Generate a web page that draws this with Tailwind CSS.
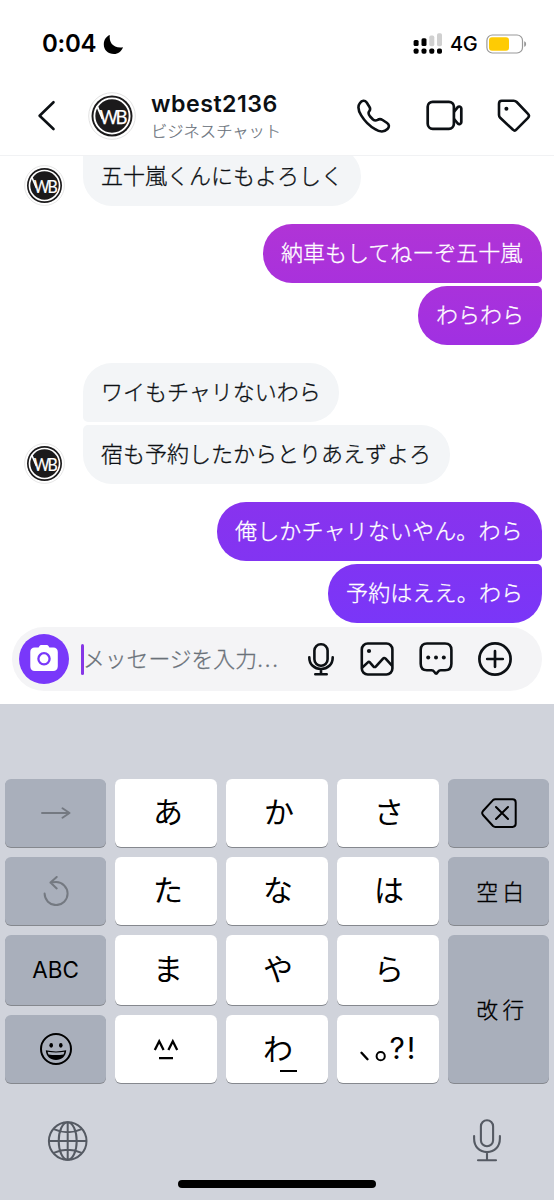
<!DOCTYPE html>
<html lang="ja">
<head>
<meta charset="utf-8">
<meta name="viewport" content="width=device-width">
<title>wbest2136</title>
<script src="https://cdn.jsdelivr.net/npm/@tailwindcss/browser@4"></script>
</head>
<body class="bg-white">
<svg class="hidden">
  <symbol id="avatar" viewBox="0 0 48 48">
    <circle cx="24" cy="24" r="23.3" fill="#fff" stroke="#e2e2e2" stroke-width="1"/>
    <circle cx="24" cy="24" r="20.5" fill="#1b1a1b"/>
    <circle cx="24" cy="24" r="17.6" fill="none" stroke="#fff" stroke-width="1.9"/>
    <path d="M9 13.8 14.5 27" fill="none" stroke="#fff" stroke-width="1.9"/>
    <g font-family="Lato, sans-serif" font-size="19.5" font-weight="400" fill="#fff" stroke="#fff" stroke-width=".25">
      <text x="11.5" y="32.4" textLength="18.5" lengthAdjust="spacingAndGlyphs">W</text>
      <text x="27.6" y="32.4" textLength="12" lengthAdjust="spacingAndGlyphs">B</text>
    </g>
  </symbol>
</svg>
<div class="flex h-[1200px] w-[554px] flex-col overflow-hidden bg-white font-['Inter','Noto_Sans_CJK_JP',sans-serif] text-[#0c1014]">

  <!-- Status bar -->
  <div class="flex h-[76px] shrink-0 items-center pt-[12px] pr-[27px] pl-[42px] text-black">
    <span class="w-[55px] text-[24px] leading-none font-semibold tracking-[-0.3px]">0:04</span>
    <svg class="ml-[6px] h-[21px] w-[21px]" viewBox="0 0 21 21"><path d="M6.8 1C5.8 9 10.5 14.5 20 13.2C18.5 17.3 15 20 11 20C5 20 .8 15.9 .8 10.5C.8 6 3.2 2.3 6.8 1Z"/></svg>
    <svg class="ml-auto h-[22px] w-[30px]" viewBox="0 0 30 22">
      <g fill="#d0d0d0"><rect x="16.3" y="2.6" width="5" height="10.6" rx="1.6"/><rect x="24" y="0.2" width="5" height="13" rx="1.6"/></g>
      <rect x=".6" y="7.1" width="5" height="5.8" rx="1.5"/><rect x="8.5" y="5.3" width="5" height="7.6" rx="1.5"/>
      <rect x=".6" y="15.4" width="5" height="5.4" rx="1.8"/><rect x="8.5" y="15.4" width="5" height="5.4" rx="1.8"/><rect x="16.3" y="15.4" width="5" height="5.4" rx="1.8"/><rect x="24" y="15.4" width="5" height="5.4" rx="1.8"/>
    </svg>
    <span class="ml-[7px] w-[30px] text-[20px] leading-none font-medium tracking-tight">4G</span>
    <svg class="ml-[6px] h-[20px] w-[41px]" viewBox="0 0 41 20">
      <rect x=".9" y="1" width="35.6" height="18" rx="5.5" fill="#fff" stroke="#999" stroke-width="1.2"/>
      <rect x="3" y="3.3" width="20" height="13.4" rx="3" fill="#fecb04"/>
      <path d="M38.2 7.2C40.8 8 40.8 12 38.2 12.8Z" fill="#999"/>
    </svg>
  </div>

  <!-- Chat header -->
  <div class="flex h-[80px] shrink-0 items-center border-b border-[#f1f2f4] pr-[23px] pl-[36px]">
    <svg class="h-[32px] w-[20px]" viewBox="0 0 20 32" fill="none" stroke="#0c1014" stroke-width="2.6" stroke-linecap="round" stroke-linejoin="round"><path d="M17.5 2.2 3.6 15.8 17.5 29"/></svg>
    <svg class="ml-[32px] h-[48px] w-[48px]"><use href="#avatar"/></svg>
    <div class="ml-[15px] flex flex-col pt-[3px]">
      <span class="text-[23.2px] leading-[27px] font-semibold tracking-[0.5px]">wbest2136</span>
      <span class="text-[16.3px] leading-[26px] font-light text-[#6a727b] [-webkit-text-stroke:0.2px]">ビジネスチャット</span>
    </div>
    <svg class="ml-auto h-[36px] w-[36px]" viewBox="0 0 36 36" fill="none" stroke="#0c1014" stroke-width="2.6" stroke-linejoin="round"><path d="M4.8 5.2C7 2.1 9.8 1.9 11.7 4.5L14.5 9C15.6 10.7 15.3 12 14.1 13.5C12.8 15.1 13.5 16.4 15.1 18.5L18 21.5C19.7 22.9 21 22.8 22.6 21.9C24.3 20.8 26 21 27.6 22L32.1 25C34.4 26.7 34.5 29 32.5 31C29.4 34.2 24.5 34 20.1 31.1C15.3 28.5 9.4 22.7 6.2 17.4C3.3 12.6 2.4 8.4 4.8 5.2Z"/></svg>
    <svg class="ml-[34px] h-[36px] w-[38px]" viewBox="0 0 38 36" fill="none" stroke="#0c1014" stroke-width="2.7" stroke-linejoin="round"><rect x="2.7" y="3.8" width="26.2" height="27" rx="5"/><path d="M29.1 13.7 32.8 9.1C34.1 7.9 36.3 8.7 36.3 10.5V24.3C36.3 26 34.1 26.7 32.8 25.5L29.1 21"/></svg>
    <svg class="ml-[32px] h-[36px] w-[36px]" viewBox="0 0 36 36"><path d="M6.7 2.7H18.6C20 2.7 20.8 3.1 21.7 4L33 15.8C34.4 17.3 34.3 18.5 33 19.8L21.3 31.7C20.2 32.9 19.2 32.9 18 31.7L5.2 19.8C4.4 19 4 18.2 4 17.1V5.8C4 3.9 5 2.7 6.7 2.7Z" fill="none" stroke="#0c1014" stroke-width="2.6" stroke-linejoin="round"/><circle cx="11.4" cy="10.8" r="2" fill="#0c1014"/></svg>
  </div>

  <!-- Messages -->
  <div class="flex h-[471px] shrink-0 flex-col overflow-hidden pr-[12px] pl-[24px] text-[22px] leading-none font-light whitespace-nowrap [-webkit-text-stroke:0.3px]">
    <div class="flex h-[50px] shrink-0 items-end">
      <svg class="h-[41px] w-[41px] shrink-0"><use href="#avatar"/></svg>
      <div class="ml-[18px] flex h-[59px] w-[278px] shrink-0 items-center rounded-[29px] rounded-tl-[5px] bg-[#f3f5f7] pb-[2px] pl-[18px]">五十嵐くんにもよろしく</div>
    </div>
    <div class="mt-[18px] flex flex-col items-end gap-[3px] text-white">
      <div class="flex h-[59px] w-[279px] items-center rounded-[29px] rounded-br-[5px] bg-linear-to-b from-[#b034d6] to-[#a931dc] pb-[2px] pl-[18px]">納車もしてねーぞ五十嵐</div>
      <div class="flex h-[59px] w-[124px] items-center rounded-[29px] rounded-tr-[5px] bg-linear-to-b from-[#a932db] to-[#a030e2] pb-[2px] pl-[18px]">わらわら</div>
    </div>
    <div class="mt-[18px] flex items-end">
      <svg class="h-[41px] w-[41px] shrink-0"><use href="#avatar"/></svg>
      <div class="ml-[18px] flex flex-col items-start gap-[3px]">
        <div class="flex h-[59px] w-[256px] items-center rounded-[29px] rounded-bl-[5px] bg-[#f3f5f7] pb-[2px] pl-[18px]">ワイもチャリないわら</div>
        <div class="flex h-[59px] w-[367px] items-center rounded-[29px] rounded-tl-[5px] bg-[#f3f5f7] pb-[2px] pl-[18px]">宿も予約したからとりあえずよろ</div>
      </div>
    </div>
    <div class="mt-[18px] flex flex-col items-end gap-[3px] text-white">
      <div class="flex h-[59px] w-[325px] items-center rounded-[29px] rounded-br-[5px] bg-linear-to-b from-[#8833ee] to-[#8234f2] pb-[2px] pl-[18px] tracking-[0.15px]">俺しかチャリないやん。わら</div>
      <div class="flex h-[59px] w-[214px] items-center rounded-[29px] rounded-tr-[5px] bg-linear-to-b from-[#8034f3] to-[#7a36f8] pb-[2px] pl-[18px] tracking-[0.15px]">予約はええ。わら</div>
    </div>
  </div>

  <!-- Composer -->
  <div class="flex h-[76.5px] shrink-0 items-start px-[12px]">
    <div class="flex h-[64px] w-full items-center rounded-full bg-[#f4f4f6] pr-[29px] pl-[7px]">
      <div class="flex h-[50px] w-[50px] shrink-0 items-center justify-center rounded-full bg-[#7938fa]">
        <svg class="mb-[2px] h-[28px] w-[28px]" viewBox="0 0 28 28"><path d="M9.2 2.4C9.9 1.3 10.6.9 11.8.9H16.2C17.4.9 18.1 1.3 18.8 2.4L19.4 3.6H23.3C26 3.6 27.8 5.4 27.8 8V22.3C27.8 25.2 26 27 23.2 27H4.8C2 27 .3 25.2.3 22.3V8C.3 5.4 2 3.6 4.7 3.6H8.6Z" fill="#fff"/><circle cx="14" cy="14.8" r="5.6" fill="none" stroke="#7938fa" stroke-width="2.3"/></svg>
      </div>
      <div class="ml-[12px] h-[31px] w-[3px] shrink-0 rounded-full bg-[#8636e6]"></div>
      <span class="ml-[-1px] pt-[2px] text-[21.8px] leading-none font-light whitespace-nowrap text-[#6a7179] [-webkit-text-stroke:0.3px]">メッセージを入力<span class="tracking-[1.4px]">...</span></span>
      <svg class="ml-auto h-[36px] w-[28px]" viewBox="0 0 28 36" fill="none" stroke="#0c1014" stroke-width="2.6" stroke-linecap="round"><rect x="7.4" y="3.2" width="13.2" height="21.5" rx="6.4"/><path d="M2.3 16.4C2.3 23.3 7.3 28 14 28S25.7 23.3 25.7 16.4M14 28V33M8.3 33.2H19.7"/></svg>
      <svg class="ml-[24px] h-[36px] w-[36px]" viewBox="0 0 36 36" fill="none" stroke="#0c1014" stroke-width="2.6" stroke-linejoin="round"><rect x="2.8" y="2.5" width="30.6" height="31" rx="6"/><path d="M3 26.8 8.6 21.6C9.7 20.6 10.4 20.7 11.3 21.8L14.3 25.3C15.2 26.3 16.1 26.3 17 25.3L23.8 17.8C24.8 16.7 25.6 16.7 26.6 17.7L33.2 24.8"/><circle cx="10" cy="10" r="2.1" fill="#0c1014" stroke="none"/></svg>
      <svg class="ml-[23px] h-[36px] w-[36px]" viewBox="0 0 36 36"><path d="M9 2.5H27C31 2.5 33.4 4.9 33.4 9V22.8C33.4 26.9 31 29.3 27 29.3H22.7C21.3 29.3 20.7 29.9 19.7 31.1Q18 34.5 16.5 31.1C15.7 29.9 14.9 29.3 13.5 29.3H9C5 29.3 2.7 26.9 2.7 22.8V9C2.7 4.9 5 2.5 9 2.5Z" fill="none" stroke="#0c1014" stroke-width="2.6"/><g fill="#0c1014"><circle cx="10.2" cy="16.4" r="2"/><circle cx="18" cy="16.4" r="2"/><circle cx="25.8" cy="16.4" r="2"/></g></svg>
      <svg class="ml-[23px] h-[36px] w-[36px]" viewBox="0 0 36 36" fill="none" stroke="#0c1014" stroke-width="2.7" stroke-linecap="round"><circle cx="18" cy="18" r="15.6"/><path d="M18 10.2V25.8M10.2 18H25.8"/></svg>
    </div>
  </div>

  <!-- Keyboard -->
  <div class="flex flex-1 flex-col bg-[#d0d3db] text-black">
    <div class="mt-[75.5px] ml-[5px] grid h-[304px] w-[545px] shrink-0 grid-cols-[101px_102px_102px_102px_101px] grid-rows-[68px_68px_70px_68px] gap-x-[9px] gap-y-[10px] text-[30px] leading-none *:flex *:items-center *:justify-center *:rounded-[6px] *:shadow-[0_1px_0_#85888e]">
      <div class="bg-[#a9afbb]"><svg class="h-[12px] w-[30px]" viewBox="0 0 30 12" fill="none" stroke="#747981" stroke-width="1.9" stroke-linecap="round" stroke-linejoin="round"><path d="M1 6H28.5M21.5 1.2 28.5 6 21.5 10.8"/></svg></div>
      <div class="bg-white pb-[3px] pl-[4px]">あ</div>
      <div class="bg-white pb-[3px] pl-[4px]">か</div>
      <div class="bg-white pb-[3px] pl-[2px]">さ</div>
      <div class="bg-[#a9afbb]"><svg class="h-[30px] w-[36px]" viewBox="0 0 36 30" fill="none" stroke="#000" stroke-width="2" stroke-linecap="round" stroke-linejoin="round"><path d="M14.3 1.2H31.5Q34.7 1.2 34.7 4.4V25.8Q34.7 28.9 31.5 28.9H14.3Q13 28.9 12 28L2 17Q.4 15 2 13L12 2.1Q13 1.2 14.3 1.2ZM15 9 27 21M27 9 15 21"/></svg></div>

      <div class="bg-[#a9afbb]"><svg class="h-[30px] w-[26px]" viewBox="0 0 26 30" fill="none" stroke="#747981" stroke-width="2" stroke-linecap="round" stroke-linejoin="round"><path d="M1.6 17.5A11.5 11.5 0 1 0 13 6.1L7.5 6.6M13.7 1 7.5 6.6 13.7 12.4"/></svg></div>
      <div class="bg-white pb-[3px] pl-[4px]">た</div>
      <div class="bg-white pb-[3px] pl-[2px]">な</div>
      <div class="bg-white pb-[3px] pl-[2px]">は</div>
      <div class="bg-[#a9afbb] pt-[3px] pl-[8px] text-[21.5px] font-light tracking-[4.5px] [-webkit-text-stroke:0.4px]">空白</div>

      <div class="bg-[#a9afbb] pt-[1px] text-[22.5px]">ABC</div>
      <div class="bg-white pb-[3px] pl-[4px]">ま</div>
      <div class="bg-white pb-[3px] pl-[2px]">や</div>
      <div class="bg-white pb-[3px] pl-[2px]">ら</div>
      <div class="row-span-2 bg-[#a9afbb] pt-[3px] pl-[8px] text-[21.5px] font-light tracking-[4.5px] [-webkit-text-stroke:0.4px]">改行</div>

      <div class="bg-[#a9afbb]"><svg class="h-[34px] w-[34px]" viewBox="0 0 34 34"><circle cx="17" cy="17" r="15" fill="none" stroke="#000" stroke-width="2"/><ellipse cx="12.2" cy="13.3" rx="1.8" ry="2.4"/><ellipse cx="21.8" cy="13.3" rx="1.8" ry="2.4"/><path d="M6.8 18.3Q17 20.5 27.2 18.3C26.8 24.5 22.6 28 17 28S7.2 24.5 6.8 18.3Z"/><path d="M8.6 19.8Q17 21.4 25.4 19.8Q25.1 21.5 24.5 22.4Q17 23.8 9.5 22.4Q8.9 21.5 8.6 19.8Z" fill="#a9afbb"/></svg></div>
      <div class="bg-white"><svg class="h-[22px] w-[28px]" viewBox="0 0 28 22" fill="none" stroke="#000" stroke-width="2.3"><path d="M2.8 12 7.2 3.2 11.6 12M16.4 12 20.8 3.2 25.2 12M7 20.2H21"/></svg></div>
      <div class="relative bg-white pb-[1px] pl-[2px]">わ<span class="absolute top-[54.5px] left-[54px] h-[2px] w-[17px] bg-black"></span></div>
      <div class="bg-white pb-[2px]"><svg class="mt-[3px] mr-[2px] h-[32px] w-[29px]" viewBox="0 0 29 32"><path d="M2.5 18.8 8.5 25.2" stroke="#000" stroke-width="2.4" stroke-linecap="round"/><circle cx="21.7" cy="22.2" r="4.1" fill="none" stroke="#000" stroke-width="2"/></svg><span class="text-[30px] leading-[40px] tracking-[2px]">?!</span></div>
    </div>

    <div class="flex h-[115px] items-center justify-between pr-[52px] pl-[47px]">
      <svg class="h-[42px] w-[42px]" viewBox="0 0 42 42" fill="none" stroke="#555a63" stroke-width="2"><circle cx="20.7" cy="21" r="18.8"/><ellipse cx="20.7" cy="21" rx="9" ry="18.8"/><path d="M20.7 2.2V39.8M1.9 21H39.5M6.8 9.1Q20.7 15.5 34.6 9.1M6.8 32.9Q20.7 26.5 34.6 32.9"/></svg>
      <svg class="mb-[2px] h-[44px] w-[30px]" viewBox="0 0 30 44" fill="none" stroke="#555a63" stroke-width="2.1" stroke-linecap="round"><rect x="8.9" y="2.3" width="12.2" height="26" rx="6.1"/><path d="M2.1 18V20.5C2.1 28.5 7.3 34.1 15 34.1S27.9 28.5 27.9 20.5V18M15 34.1V42M6 42.2H24"/></svg>
    </div>
    <div class="mt-[-18px] ml-[178px] h-[7.5px] w-[198px] shrink-0 rounded-full bg-black"></div>
  </div>
</div>
</body>
</html>
